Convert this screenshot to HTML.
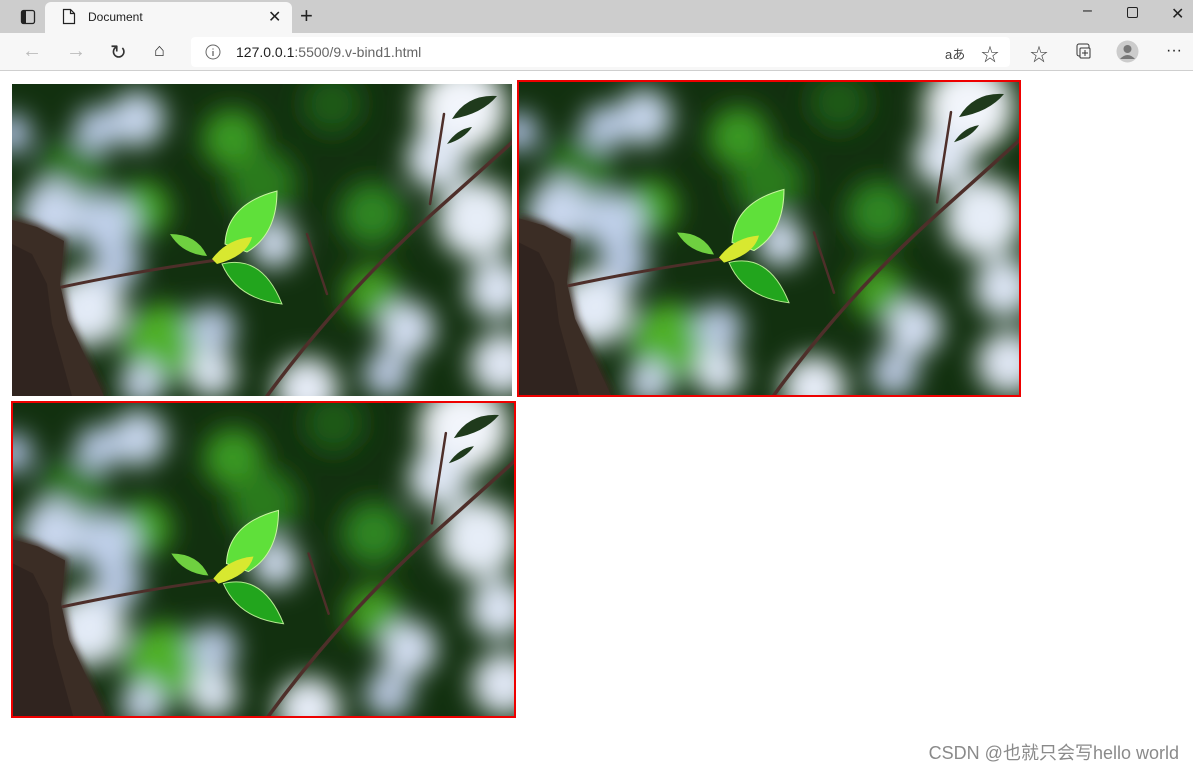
<!DOCTYPE html>
<html><head><meta charset="utf-8"><style>
*{margin:0;padding:0;box-sizing:border-box}
body{width:1193px;height:768px;overflow:hidden;background:#fff;font-family:"Liberation Sans","Noto Sans CJK SC",sans-serif;position:relative}
.tb{position:absolute;left:0;top:0;width:1193px;height:33px;background:#cdcdcd}
.tab{position:absolute;left:45px;top:2px;width:247px;height:32px;background:#f7f7f7;border-radius:6px 6px 0 0}
.bar{position:absolute;left:0;top:33px;width:1193px;height:38px;background:#f7f7f7;border-bottom:1px solid #cfcfcf}
.url{position:absolute;left:191px;top:4px;width:819px;height:30px;background:#fff;border-radius:4px}
.t{position:absolute;font-size:12px;color:#222}
.img{position:absolute}
.wm{position:absolute;right:14px;top:739px;font-size:18px;color:#8a8a8a}
</style></head><body>
<svg width="0" height="0" style="position:absolute">
<defs>
<filter id="bl" x="-50%" y="-50%" width="200%" height="200%"><feGaussianBlur stdDeviation="13"/></filter>
<filter id="bl3" x="-50%" y="-50%" width="200%" height="200%"><feGaussianBlur stdDeviation="4"/></filter>
<symbol id="pic" viewBox="0 0 500 312" preserveAspectRatio="none">
<rect width="500" height="312" fill="#12300f"/>
<g filter="url(#bl)">
<circle cx="220" cy="55" r="30" fill="#3a9a22"/>
<circle cx="130" cy="125" r="28" fill="#45a526"/>
<circle cx="360" cy="130" r="32" fill="#2f8520"/>
<circle cx="150" cy="260" r="40" fill="#50b02c"/>
<circle cx="360" cy="210" r="28" fill="#44a024"/>
<circle cx="250" cy="100" r="35" fill="#2a7a1a"/>
<circle cx="60" cy="90" r="35" fill="#327a24"/>
<circle cx="320" cy="20" r="30" fill="#1f5a15"/>
<circle cx="125" cy="35" r="28" fill="#c5d4ea"/>
<circle cx="85" cy="45" r="22" fill="#b8c9e4"/>
<circle cx="0" cy="50" r="20" fill="#aebfe0"/>
<circle cx="40" cy="130" r="32" fill="#c9d7ee"/>
<circle cx="95" cy="140" r="30" fill="#c0d0ea"/>
<circle cx="75" cy="225" r="38" fill="#e3ebf7"/>
<circle cx="105" cy="180" r="24" fill="#b7c8e4"/>
<circle cx="200" cy="245" r="24" fill="#b8c8e2"/>
<circle cx="262" cy="160" r="24" fill="#d0dcef"/>
<circle cx="200" cy="290" r="24" fill="#dde6f4"/>
<circle cx="450" cy="25" r="45" fill="#f2f5fb"/>
<circle cx="425" cy="75" r="30" fill="#dfe7f4"/>
<circle cx="465" cy="135" r="40" fill="#e6edf7"/>
<circle cx="485" cy="205" r="30" fill="#dbe4f3"/>
<circle cx="395" cy="245" r="28" fill="#d2ddf0"/>
<circle cx="490" cy="280" r="32" fill="#dfe6f3"/>
<circle cx="295" cy="305" r="32" fill="#e6ecf7"/>
<circle cx="375" cy="290" r="24" fill="#b9c7df"/>
<circle cx="130" cy="300" r="22" fill="#c7d4ea"/>
</g>
<g filter="url(#bl3)">
<path d="M0 132 L25 140 L55 155 L50 200 L58 235 L95 312 L0 312Z" fill="#3a2c24"/>
</g>
<path d="M0 136 L25 143 L52 157 L48 200 L56 236 L92 312 L0 312Z" fill="#3b2d25"/>
<path d="M0 160 L20 170 L35 200 L40 240 L60 312 L0 312Z" fill="#2c211c" opacity=".7"/>
<g stroke="#4e2f2a" fill="none" stroke-linecap="round">
<path d="M50 203 Q120 188 205 176" stroke-width="3"/>
<path d="M255 312 Q330 210 420 130 T500 58" stroke-width="3.5"/>
<path d="M295 150 L315 210" stroke-width="2.5"/>
<path d="M418 120 L432 30" stroke-width="2.5"/>
</g>
<path d="M440 35 Q455 10 485 12 Q470 30 440 35Z" fill="#1f3a1c"/>
<path d="M435 60 Q445 45 460 43 Q452 55 435 60Z" fill="#1f3a1c"/>
<path d="M213 160 Q215 120 265 107 Q265 150 235 168Z" fill="#5fe03a" stroke="#c9f5a0" stroke-width="1"/>
<path d="M210 180 Q250 170 270 220 Q225 215 210 180Z" fill="#22a51d" stroke="#b5ea90" stroke-width="1"/>
<path d="M158 150 Q185 150 195 172 Q170 170 158 150Z" fill="#6fd040"/>
<path d="M200 175 Q215 155 240 153 Q235 172 205 180Z" fill="#d8e830"/>
</symbol>
</defs>
</svg>
<div class="tb"></div>
<div class="tab"></div>
<svg style="position:absolute;left:20px;top:9px" width="16" height="16"><rect x="1.5" y="1.5" width="13" height="13" rx="2" fill="none" stroke="#222" stroke-width="1.3"/><rect x="2" y="2" width="4" height="12" fill="#222"/></svg>
<svg style="position:absolute;left:62px;top:8px" width="14" height="17"><path d="M1.5 1.5h7l4 4v10h-11z M8.5 1.5v4h4" fill="none" stroke="#222" stroke-width="1.2"/></svg>
<div class="t" style="left:88px;top:10px">Document</div>
<div class="t" style="left:268px;top:7px;font-size:16px">✕</div>
<div class="t" style="left:300px;top:3px;font-size:22px;font-weight:300">+</div>
<div class="t" style="left:1083px;top:2px;font-size:16px">–</div>
<svg style="position:absolute;left:1127px;top:7px" width="11" height="11"><rect x=".5" y=".5" width="10" height="10" rx="1.5" fill="none" stroke="#222"/></svg>
<div class="t" style="left:1171px;top:4px;font-size:16px">✕</div>
<div class="bar"><div class="url"></div></div>
<div class="t" style="left:22px;top:40px;font-size:20px;color:#bbb">←</div>
<div class="t" style="left:66px;top:40px;font-size:20px;color:#bbb">→</div>
<div class="t" style="left:110px;top:40px;font-size:20px;color:#333">↻</div>
<div class="t" style="left:154px;top:40px;font-size:18px;color:#333">⌂</div>
<svg style="position:absolute;left:205px;top:44px" width="16" height="16"><circle cx="8" cy="8" r="7" fill="none" stroke="#666"/><path d="M8 7v5M8 4.5v1" stroke="#666" stroke-width="1.3"/></svg>
<div class="t" style="left:236px;top:44px;font-size:14px;color:#222">127.0.0.1<span style="color:#666">:5500/9.v-bind1.html</span></div>
<div class="t" style="left:945px;top:44px;font-size:13px;color:#444">aあ</div>
<div class="t" style="left:981px;top:41px;font-size:18px;color:#444">☆</div>
<div class="t" style="left:1030px;top:41px;font-size:18px;color:#444">☆</div>
<svg style="position:absolute;left:1074px;top:43px" width="18" height="18"><rect x="3" y="1" width="12" height="12" rx="2" fill="none" stroke="#333"/><rect x="6" y="5" width="10" height="10" rx="1" fill="#f7f7f7" stroke="#333"/><path d="M11 7v6M8 10h6" stroke="#333"/></svg>
<svg style="position:absolute;left:1116px;top:40px" width="23" height="23"><circle cx="11.5" cy="11.5" r="11" fill="#ccc"/><circle cx="11.5" cy="9" r="4" fill="#777"/><path d="M4 19q7.5-8 15 0" fill="#777"/></svg>
<div class="t" style="left:1166px;top:42px;font-size:16px;color:#222">···</div>
<svg class="img" style="left:12px;top:84px" width="500" height="312"><use href="#pic"/></svg>
<div class="img" style="left:517px;top:80px;width:504px;height:317px;border:2px solid #e00"><svg width="500" height="313" style="display:block"><use href="#pic"/></svg></div>
<div class="img" style="left:11px;top:401px;width:505px;height:317px;border:2px solid #e00"><svg width="501" height="313" style="display:block"><use href="#pic"/></svg></div>
<div class="wm">CSDN @也就只会写hello world</div>
</body></html>
